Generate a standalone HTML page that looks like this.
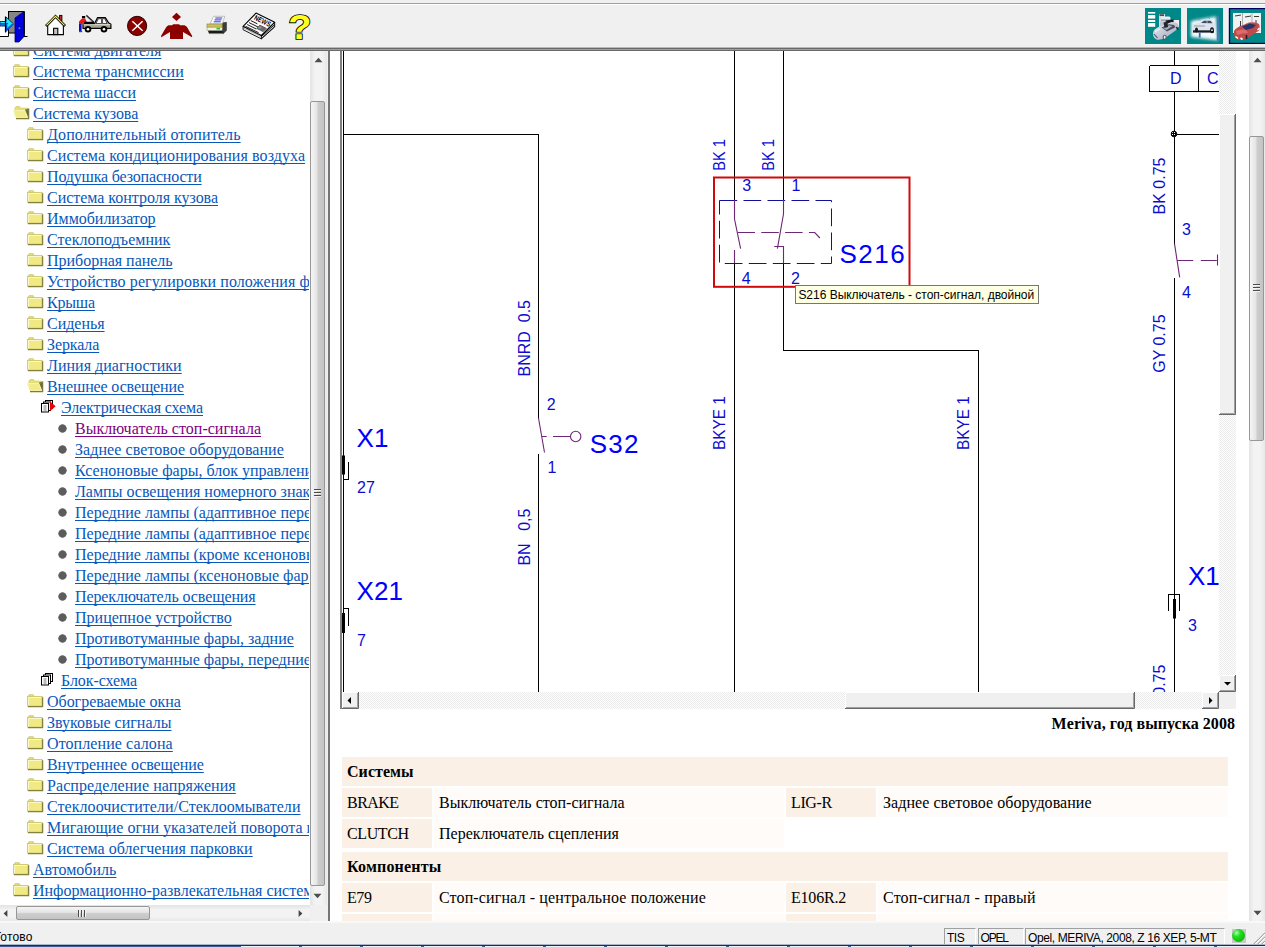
<!DOCTYPE html>
<html lang="ru">
<head>
<meta charset="utf-8">
<title>TIS</title>
<style>
*{box-sizing:border-box}
html,body{margin:0;padding:0}
body{width:1265px;height:947px;overflow:hidden;background:#f0f0f0;position:relative;font-family:"Liberation Serif",serif;font-size:16px;color:#000}
.abs{position:absolute}
/* toolbar */
#tb{left:0;top:0;width:1265px;height:51px;background:#f0f0f0;z-index:5}
#tb .l1{left:0;top:3px;width:1265px;height:1px;background:#a0a0a0}
#tb .l2{left:0;top:4px;width:1265px;height:1px;background:#fff}
#tb .b1{left:0;top:47px;width:1265px;height:1px;background:#b8b8b8}
#tb .b2{left:0;top:48px;width:1265px;height:3px;background:linear-gradient(180deg,#696969 0,#696969 1px,#a0a0a0 1px,#a0a0a0 2px,#696969 2px,#696969 3px)}
/* tree */
#tree{left:0;top:50px;width:309px;height:855px;background:#fff;overflow:hidden}
#tree .rows{position:absolute;left:0;top:-10px;width:600px}
.r{height:21px;line-height:21px;white-space:nowrap;position:relative;font-size:16px}
.r a{color:#0758ba;text-decoration:underline;text-underline-offset:2px;text-decoration-skip-ink:none;text-decoration-thickness:1px;position:absolute;top:0}
.r a.v{color:#800080}
.r svg{position:absolute}
.l0 a{left:33px}.l1 a{left:47px}.l2 a{left:61px}.l3 a{left:75px}
.l0 svg{left:13px;top:3px}.l1 svg{left:27px;top:3px}.l2 svg{left:41px;top:3px}
.l3 i{position:absolute;left:58px;top:6px;width:9px;height:9px;border-radius:50%;background:radial-gradient(circle,#5c5c5c 0,#5c5c5c 52%,#777 62%,rgba(130,130,130,0) 74%)}
/* scrollbars win7 */
.sbv{background:linear-gradient(90deg,#e3e3e3,#f3f3f3 30%,#f3f3f3 70%,#e8e8e8)}
.sbh{background:linear-gradient(180deg,#e3e3e3,#f3f3f3 30%,#f3f3f3 70%,#e8e8e8)}
.thv{border:1px solid #979797;border-radius:2px;background:linear-gradient(90deg,#f5f5f5,#e4e4e4 45%,#cdcdcd 55%,#c4c4c4)}
.thh{border:1px solid #979797;border-radius:2px;background:linear-gradient(180deg,#f5f5f5,#e4e4e4 45%,#cdcdcd 55%,#c4c4c4)}
/* right pane */
#rp{left:330px;top:50px;width:919px;height:871px;background:#fff;overflow:hidden}
/* status */
#st{left:0;top:921px;width:1265px;height:24px;background:#f0f0f0;font-family:"Liberation Sans",sans-serif;font-size:12px}

#tbl{left:12px;top:707px;width:886px;font-size:16px}
#tbl .h{position:absolute;left:0;width:886px;height:29px;line-height:29px;background:#faf0e6;font-weight:bold;padding-left:5px}
#tbl .c{position:absolute;height:29px;line-height:29px;padding-left:5px;white-space:nowrap;overflow:hidden}
#tbl .k{background:#faf0e6;width:90px}
#tbl .d{background:#fefbf9;width:350px}
.pn{position:absolute;top:7px;height:17px;border-top:1px solid #a0a0a0;border-left:1px solid #a0a0a0;border-right:1px solid #fff;line-height:18px;padding-left:2px;white-space:nowrap;overflow:hidden}
</style>
</head>
<body>
<!-- TOOLBAR -->
<div id="tb" class="abs">
<div class="abs l1"></div><div class="abs l2"></div>
<div class="abs b1"></div><div class="abs b2"></div>

<!-- door / exit -->
<svg class="abs" style="left:0;top:9px" width="29" height="35" viewBox="0 9 29 35">
<rect x="0" y="27" width="9" height="9" fill="#fff"/>
<path d="M0 36.500 H8.500 V33" stroke="#000" fill="none"/>
<path d="M24 36.500 H27.500" stroke="#000" fill="none"/>
<rect x="8.500" y="11.500" width="15.500" height="21.500" fill="#858585" stroke="#000"/>
<path d="M15 18 L24 11.500 L24 36.500 L19 42 L15 42 Z" fill="#0000d8" stroke="#00007a" stroke-width="0.8"/>
<path d="M24.200 11.500 V36.500" stroke="#000" stroke-width="1.2"/>
<circle cx="19.400" cy="28.300" r="1" fill="#5a78ff"/>
<path d="M0 21.500 H6 V17 L13.500 23.800 L6 31.500 V26 H0 Z" fill="#19e6ff" stroke="#0a2a50" stroke-width="0.9"/>
<path d="M0 25 H6.500 V30 L12.500 24.300" fill="none" stroke="#0050e0" stroke-width="1.600"/>
<path d="M0 23.600 H8" stroke="#0a5a6a" stroke-width="1"/>
<path d="M5.500 16.500 V32.500" stroke="#000" stroke-width="1.200"/>
</svg>
<!-- home -->
<svg class="abs" style="left:44px;top:12px" width="24" height="26" viewBox="44 12 24 26">
<rect x="59.600" y="15.400" width="2.300" height="5.500" fill="#c83220" stroke="#000" stroke-width="0.900"/>
<path d="M47.700 25 V34.600 H63.400 V25 L55.500 17.200 Z" fill="#fff" stroke="#000" stroke-width="1.100"/>
<path d="M46.900 25.100 L55.500 16.400 L64.100 25.100" fill="none" stroke="#000" stroke-width="2.700" stroke-linecap="square" stroke-linejoin="miter"/>
<path d="M46.900 25 L55.500 16.400 L64.100 25" fill="none" stroke="#fff040" stroke-width="1.100" stroke-linecap="square"/>
<rect x="53.600" y="28.300" width="4.200" height="6.300" fill="#c4c4c4" stroke="#000" stroke-width="1.100"/>
</svg>
<!-- car + mechanic -->
<svg class="abs" style="left:77px;top:12px" width="38" height="26" viewBox="77 12 38 26">
<rect x="82" y="16" width="3.200" height="2.400" fill="#000"/>
<path d="M82 18.400 L85.200 18.600 L87 22.400 L83.500 22.800 L82 24.200 H79 V21.500 Z" fill="#e81818"/>
<rect x="79" y="24" width="2.600" height="7.500" fill="#0a0ac8"/>
<rect x="79" y="31" width="3.200" height="1.200" fill="#8a1a8a"/>
<path d="M86.300 15.400 L93.800 22.300" stroke="#2a2a2a" stroke-width="1.500"/>
<path d="M85.800 16 L92.800 22.600" stroke="#a0a0a0" stroke-width="0.700"/>
<path d="M84.500 21.800 H94 V24.200 H83.500 Z" fill="#000"/>
<path d="M83 24 H94.300 L97.600 17.600 H105.300 L108.600 22.800 L110.900 24.300 V28.400 H83 Z" fill="#a9a696" stroke="#000" stroke-width="1.200" stroke-linejoin="round"/>
<path d="M96 23.500 L98.500 18.700 H101.500 V23.500 Z M102.600 18.700 H104.700 L107 23.500 H102.600 Z" fill="#fff" stroke="#000" stroke-width="0.600"/>
<path d="M83.500 24.600 H110.300" stroke="#e8e8e0" stroke-width="0.800"/>
<circle cx="88" cy="29.200" r="3.300" fill="#000"/><circle cx="88" cy="29.200" r="1.300" fill="#fff"/>
<circle cx="104" cy="29.200" r="3.300" fill="#000"/><circle cx="104" cy="29.200" r="1.300" fill="#fff"/>
</svg>
<!-- cancel -->
<svg class="abs" style="left:125px;top:14px" width="24" height="24" viewBox="125 14 24 24">
<circle cx="137.100" cy="25.900" r="9.600" fill="#8d0000" stroke="#2a0000" stroke-width="1"/>
<path d="M132.300 21.200 L142.600 30.800 M142.600 21.200 L132.300 30.800" stroke="#fff" stroke-width="1.500"/>
</svg>
<!-- person -->
<svg class="abs" style="left:159px;top:11px" width="36" height="30" viewBox="159 11 36 30">
<path d="M176.500 12.700 L181 16.900 L176.500 21.100 L172 16.900 Z" fill="#8d0000"/>
<path d="M173.100 24.300 H179.100 L180 25.300 H184.500 Q186.500 26 187.300 27.600 L192.200 36 L192 37.200 L183 32 V38.900 H170 V32 L161.300 37.200 L161 36 L166 27.600 Q166.800 26 168.500 25.300 H172.200 Z" fill="#8d0000"/>
</svg>
<!-- printer -->
<svg class="abs" style="left:204px;top:13px" width="26" height="24" viewBox="204 13 26 24">
<path d="M222 22.500 L226.800 22 V30.500 L223.500 33.700 L222 33.700 Z" fill="#3c3c3c"/>
<path d="M213.500 16.300 H224.800 L222.200 23.800 H210.200 Z" fill="#fff" stroke="#9a9a9a" stroke-width="0.600"/>
<path d="M215.300 18 H222.300 M214.500 19.900 H221.500 M213.700 21.800 H220.700" stroke="#1a1ad0" stroke-width="0.900"/>
<rect x="207" y="24" width="15.200" height="3.200" fill="#c9c060" stroke="#8a8430" stroke-width="0.600"/>
<rect x="207" y="27.200" width="15.200" height="3.300" fill="#f4f2e0" stroke="#8a8a70" stroke-width="0.500"/>
<rect x="216.500" y="27.800" width="3.500" height="1.700" fill="#20c040"/>
<path d="M208 30.800 H222.500 L223.500 33.700 H209 Z" fill="#1a1a1a"/>
<path d="M209 33.600 H223" stroke="#9a943c" stroke-width="0.900"/>
</svg>
<!-- newspaper -->
<svg class="abs" style="left:240px;top:10px" width="38" height="32" viewBox="240 10 38 32">
<defs><pattern id="hat" width="1.600" height="1.600" patternUnits="userSpaceOnUse" patternTransform="rotate(-42)"><rect width="1.600" height="1.600" fill="#e8e8e8"/><rect width="1.600" height="0.900" fill="#222"/></pattern></defs>
<path d="M261.400 35.500 L274.700 22.200 V27 L261.400 38.900 Z" fill="url(#hat)" stroke="#000" stroke-width="0.900" stroke-linejoin="round"/>
<path d="M243.100 26.300 L261.400 35.500 V38.900 L243.100 29.700 Z" fill="#fff" stroke="#000" stroke-width="0.900" stroke-linejoin="round"/>
<path d="M243.600 28 L261.400 37.200" stroke="#888" stroke-width="0.600"/>
<path d="M243.100 26.300 L256 13.100 L274.700 22.200 L261.400 35.500 Z" fill="#fbfbfb" stroke="#000" stroke-width="1.100" stroke-linejoin="round"/>
<g stroke="#1a1a1a" stroke-width="1">
<path d="M250.800 20.600 L257.300 23.800"/>
<path d="M249 22.600 L258.200 27.100"/>
<path d="M247.200 24.500 L256.300 29"/>
<path d="M245.600 26.300 L258.600 32.700"/>
<path d="M246.300 28.600 L259.500 35.100" stroke="#666" stroke-width="0.700"/>
</g>
<path d="M259.800 25.200 L266.300 28.400 L263.200 31.600 L256.800 28.400 Z" fill="#8c8c8c" stroke="#222" stroke-width="0.700"/>
<path d="M262.500 26.800 L265.700 28.400 L263.200 31 L260 29.400 Z" fill="#6a6a6a"/>
<text transform="matrix(0.690 0.337 -0.470 0.840 253.400 19.200)" font-family="'Liberation Sans',sans-serif" font-weight="bold" font-size="7.500" fill="#000" letter-spacing="0.200">NEWS</text>
</svg>
<!-- help -->
<svg class="abs" style="left:285px;top:8px" width="30" height="36" viewBox="285 8 30 36">
<text transform="translate(288.300,39.300) scale(1.070,1)" font-family="'Liberation Sans',sans-serif" font-weight="bold" font-size="35.500" fill="#ffff20" stroke="#000" stroke-width="1.700" paint-order="stroke fill">?</text>
</svg>
<!-- right tiles -->
<svg class="abs" style="left:1145px;top:8px" width="120" height="36" viewBox="1145 8 120 36">
<defs>
<filter id="bl1" x="-20%" y="-20%" width="140%" height="140%"><feGaussianBlur stdDeviation="0.600"/></filter>
<filter id="bl2" x="-20%" y="-20%" width="140%" height="140%"><feGaussianBlur stdDeviation="1.600"/></filter>
<linearGradient id="sil" x1="0" y1="0" x2="1" y2="1"><stop offset="0" stop-color="#eef0f6"/><stop offset="1" stop-color="#9aa2b8"/></linearGradient>
</defs>
<!-- tile 1 -->
<rect x="1145" y="8" width="36" height="36" fill="#008888"/>
<g fill="#fff"><rect x="1148" y="12" width="7.200" height="1.600"/><rect x="1148" y="15" width="7.200" height="3.600"/><rect x="1148" y="20" width="7.200" height="2"/><rect x="1148" y="23" width="7.200" height="3.800"/></g>
<g filter="url(#bl1)">
<rect x="1159" y="14" width="6" height="13" fill="#d8dce2"/>
<rect x="1159.500" y="14.300" width="4.500" height="1.600" fill="#3a3e44"/>
<rect x="1161" y="16.500" width="9.500" height="4" rx="1.500" fill="#e8eaee"/>
<rect x="1161" y="19.500" width="9.500" height="1.200" fill="#8a9098"/>
<rect x="1160" y="21.500" width="6" height="4.500" fill="#c4c8d0"/>
<path d="M1166 20.500 L1173.500 19.500 L1177 23.500 L1168 26 Z" fill="#16181c"/>
<rect x="1173.600" y="20" width="5.400" height="7" fill="#eceef2"/>
<path d="M1153 33.500 Q1153 28.500 1161 26 L1171.500 22 Q1178 21.500 1178.600 26 L1177 29.500 L1166.500 37 Q1160 41 1156 39.300 Q1153 37.500 1153 33.500 Z" fill="url(#sil)"/>
<path d="M1161.500 27.500 L1169 24.300 L1174 25 L1175.500 27.300 L1167 31.500 Z" fill="#4a505e"/>
<path d="M1163 28 L1169 25.300 L1172.500 26 L1166.500 30 Z" fill="#a8b0c0"/>
<path d="M1163.500 22.500 L1167.500 21.500 L1168 27 L1164.500 28 Z" fill="#24272e"/>
<ellipse cx="1164.700" cy="37.200" rx="1.500" ry="2" fill="#f0f0f4" stroke="#3a3e48" stroke-width="0.900"/>
<path d="M1176.500 27 L1178 30" stroke="#2a2e38" stroke-width="1.600"/>
<path d="M1154 34 L1157.500 38" stroke="#4a4e5c" stroke-width="1.100"/>
<path d="M1155 31.500 L1160 29" stroke="#fff" stroke-width="0.800"/>
</g>
<!-- tile 2 -->
<rect x="1187" y="8" width="36" height="36" fill="#008888"/>
<g filter="url(#bl2)"><path d="M1191 21 L1216 16.500 L1218 40.500 L1191 37 Z" fill="#f4f9fc"/></g>
<g filter="url(#bl1)">
<rect x="1216.800" y="16" width="2" height="24.500" fill="#4a78bc"/>
<path d="M1193 24 L1199.500 22.500 L1203 19.800 L1211.500 19.800 L1214.500 23.500 L1215 30 L1193 30.500 Z" fill="#dfe4ec"/>
<path d="M1201 23 L1204 20.700 L1210.500 20.700 L1212.500 23.300 Z" fill="#3c4a6c"/>
<path d="M1207 20.700 V23.200" stroke="#dfe4ec" stroke-width="0.700"/>
<path d="M1193 30.300 H1214 V32.600 H1193 Z" fill="#181e28"/>
<ellipse cx="1212" cy="30.300" rx="1.900" ry="3" fill="#12151a"/>
<ellipse cx="1196.500" cy="30" rx="1.500" ry="2.400" fill="#12151a"/>
<circle cx="1212" cy="30.200" r="0.900" fill="#e8e8e8"/>
<rect x="1198.800" y="32.600" width="1.800" height="5" fill="#3a68b0"/>
<path d="M1194 26 H1205" stroke="#8a94a8" stroke-width="0.900"/>
<path d="M1197 17.500 L1200 20.500 M1207 16.500 L1210 18.500" stroke="#6a86b8" stroke-width="0.800"/>
</g>
<!-- tile 3 -->
<rect x="1229.500" y="8.500" width="40" height="35" fill="#008888" stroke="#000064" stroke-width="1.400"/>
<rect x="1233" y="13" width="28" height="20" fill="#f0f2f2"/>
<g filter="url(#bl1)">
<path d="M1242.500 13 V27 M1252 13 V22" stroke="#9aa0a0" stroke-width="0.800"/>
<path d="M1235 16 L1241 15 M1245 17 L1251 16 M1254 16.500 L1259 16.500 M1240.500 21 V26 M1256 20 V24" stroke="#3a3a3a" stroke-width="1"/>
<path d="M1234 31 Q1236 27.500 1242 25.500 L1249 22.500 Q1256 21.500 1259 24 Q1260.500 27 1259 30.500 L1250 36.500 L1243 40 Q1237 40.500 1235 37.500 Q1233.500 34 1234 31 Z" fill="#c04a4a"/>
<path d="M1242 26.500 L1250 23.500 L1256 25 L1253 28 L1246 30 Z" fill="#26306c"/>
<path d="M1236 31 Q1242 28.500 1246 30 L1248 33 Q1242 33 1237 35 Z" fill="#dc6c6c"/>
<path d="M1235.500 36.500 L1238 38.500 M1240.500 38 L1242.500 39.500" stroke="#fff" stroke-width="1.600"/>
<path d="M1246.500 35 V39" stroke="#1a1a2a" stroke-width="1.600"/>
<path d="M1257.500 30 L1259.500 28" stroke="#fff" stroke-width="1.200"/>
</g>
</svg>

</div>

<!-- TREE -->
<div id="tree" class="abs"><div class="rows">

<div class="r l0"><svg width="17" height="14" viewBox="0 0 17 14"><path d="M1 2.600 L2 0.700 H6.200 L7.300 2.600 Z" fill="#e6e07a" stroke="#c8c36c" stroke-width="0.800"/><rect x="0.500" y="2.500" width="14.600" height="9.600" fill="#f1e984" stroke="#cdc870" stroke-width="0.900"/><path d="M1.500 11.200 V3.500 H14.200" fill="none" stroke="#fbf9d2" stroke-width="0.900"/><path d="M1 12.600 H15.600 V3.200" fill="none" stroke="#84823e" stroke-width="1.300"/></svg><a style="letter-spacing:-0.012px">Система двигателя</a></div>
<div class="r l0"><svg width="17" height="14" viewBox="0 0 17 14"><path d="M1 2.600 L2 0.700 H6.200 L7.300 2.600 Z" fill="#e6e07a" stroke="#c8c36c" stroke-width="0.800"/><rect x="0.500" y="2.500" width="14.600" height="9.600" fill="#f1e984" stroke="#cdc870" stroke-width="0.900"/><path d="M1.500 11.200 V3.500 H14.200" fill="none" stroke="#fbf9d2" stroke-width="0.900"/><path d="M1 12.600 H15.600 V3.200" fill="none" stroke="#84823e" stroke-width="1.300"/></svg><a style="letter-spacing:0.068px">Система трансмиссии</a></div>
<div class="r l0"><svg width="17" height="14" viewBox="0 0 17 14"><path d="M1 2.600 L2 0.700 H6.200 L7.300 2.600 Z" fill="#e6e07a" stroke="#c8c36c" stroke-width="0.800"/><rect x="0.500" y="2.500" width="14.600" height="9.600" fill="#f1e984" stroke="#cdc870" stroke-width="0.900"/><path d="M1.500 11.200 V3.500 H14.200" fill="none" stroke="#fbf9d2" stroke-width="0.900"/><path d="M1 12.600 H15.600 V3.200" fill="none" stroke="#84823e" stroke-width="1.300"/></svg><a style="letter-spacing:-0.056px">Система шасси</a></div>
<div class="r l0"><svg width="17" height="14" viewBox="0 0 17 14"><path d="M2 2.2 L3 0.6 L6.5 0.6 L7.6 2.2 L14.5 2.2 L14.5 5 L2 5 Z" fill="#e6df74" stroke="#d8d270" stroke-width="1"/><path d="M0.5 4.6 L12 4.6 L15 12 L3 12 Z" fill="#f2eb8a" stroke="#f7f3b8" stroke-width="1"/><path d="M12.2 4.2 L15.6 3.2 L15.6 12.6 L3 12.6" fill="none" stroke="#7d7b3a" stroke-width="1.3"/><path d="M12.4 4.6 L15.2 4 L15.2 11.4 Z" fill="#6b6934"/></svg><a style="letter-spacing:-0.04px">Система кузова</a></div>
<div class="r l1"><svg width="17" height="14" viewBox="0 0 17 14"><path d="M1 2.600 L2 0.700 H6.200 L7.300 2.600 Z" fill="#e6e07a" stroke="#c8c36c" stroke-width="0.800"/><rect x="0.500" y="2.500" width="14.600" height="9.600" fill="#f1e984" stroke="#cdc870" stroke-width="0.900"/><path d="M1.500 11.200 V3.500 H14.200" fill="none" stroke="#fbf9d2" stroke-width="0.900"/><path d="M1 12.600 H15.600 V3.200" fill="none" stroke="#84823e" stroke-width="1.300"/></svg><a style="letter-spacing:0.121px">Дополнительный отопитель</a></div>
<div class="r l1"><svg width="17" height="14" viewBox="0 0 17 14"><path d="M1 2.600 L2 0.700 H6.200 L7.300 2.600 Z" fill="#e6e07a" stroke="#c8c36c" stroke-width="0.800"/><rect x="0.500" y="2.500" width="14.600" height="9.600" fill="#f1e984" stroke="#cdc870" stroke-width="0.900"/><path d="M1.500 11.200 V3.500 H14.200" fill="none" stroke="#fbf9d2" stroke-width="0.900"/><path d="M1 12.600 H15.600 V3.200" fill="none" stroke="#84823e" stroke-width="1.300"/></svg><a style="letter-spacing:0.08px">Система кондиционирования воздуха</a></div>
<div class="r l1"><svg width="17" height="14" viewBox="0 0 17 14"><path d="M1 2.600 L2 0.700 H6.200 L7.300 2.600 Z" fill="#e6e07a" stroke="#c8c36c" stroke-width="0.800"/><rect x="0.500" y="2.500" width="14.600" height="9.600" fill="#f1e984" stroke="#cdc870" stroke-width="0.900"/><path d="M1.500 11.200 V3.500 H14.200" fill="none" stroke="#fbf9d2" stroke-width="0.900"/><path d="M1 12.600 H15.600 V3.200" fill="none" stroke="#84823e" stroke-width="1.300"/></svg><a style="letter-spacing:-0.172px">Подушка безопасности</a></div>
<div class="r l1"><svg width="17" height="14" viewBox="0 0 17 14"><path d="M1 2.600 L2 0.700 H6.200 L7.300 2.600 Z" fill="#e6e07a" stroke="#c8c36c" stroke-width="0.800"/><rect x="0.500" y="2.500" width="14.600" height="9.600" fill="#f1e984" stroke="#cdc870" stroke-width="0.900"/><path d="M1.500 11.200 V3.500 H14.200" fill="none" stroke="#fbf9d2" stroke-width="0.900"/><path d="M1 12.600 H15.600 V3.200" fill="none" stroke="#84823e" stroke-width="1.300"/></svg><a style="letter-spacing:-0.026px">Система контроля кузова</a></div>
<div class="r l1"><svg width="17" height="14" viewBox="0 0 17 14"><path d="M1 2.600 L2 0.700 H6.200 L7.300 2.600 Z" fill="#e6e07a" stroke="#c8c36c" stroke-width="0.800"/><rect x="0.500" y="2.500" width="14.600" height="9.600" fill="#f1e984" stroke="#cdc870" stroke-width="0.900"/><path d="M1.500 11.200 V3.500 H14.200" fill="none" stroke="#fbf9d2" stroke-width="0.900"/><path d="M1 12.600 H15.600 V3.200" fill="none" stroke="#84823e" stroke-width="1.300"/></svg><a style="letter-spacing:-0.019px">Иммобилизатор</a></div>
<div class="r l1"><svg width="17" height="14" viewBox="0 0 17 14"><path d="M1 2.600 L2 0.700 H6.200 L7.300 2.600 Z" fill="#e6e07a" stroke="#c8c36c" stroke-width="0.800"/><rect x="0.500" y="2.500" width="14.600" height="9.600" fill="#f1e984" stroke="#cdc870" stroke-width="0.900"/><path d="M1.500 11.200 V3.500 H14.200" fill="none" stroke="#fbf9d2" stroke-width="0.900"/><path d="M1 12.600 H15.600 V3.200" fill="none" stroke="#84823e" stroke-width="1.300"/></svg><a style="letter-spacing:0.03px">Стеклоподъемник</a></div>
<div class="r l1"><svg width="17" height="14" viewBox="0 0 17 14"><path d="M1 2.600 L2 0.700 H6.200 L7.300 2.600 Z" fill="#e6e07a" stroke="#c8c36c" stroke-width="0.800"/><rect x="0.500" y="2.500" width="14.600" height="9.600" fill="#f1e984" stroke="#cdc870" stroke-width="0.900"/><path d="M1.500 11.200 V3.500 H14.200" fill="none" stroke="#fbf9d2" stroke-width="0.900"/><path d="M1 12.600 H15.600 V3.200" fill="none" stroke="#84823e" stroke-width="1.300"/></svg><a style="letter-spacing:-0.018px">Приборная панель</a></div>
<div class="r l1"><svg width="17" height="14" viewBox="0 0 17 14"><path d="M1 2.600 L2 0.700 H6.200 L7.300 2.600 Z" fill="#e6e07a" stroke="#c8c36c" stroke-width="0.800"/><rect x="0.500" y="2.500" width="14.600" height="9.600" fill="#f1e984" stroke="#cdc870" stroke-width="0.900"/><path d="M1.500 11.200 V3.500 H14.200" fill="none" stroke="#fbf9d2" stroke-width="0.900"/><path d="M1 12.600 H15.600 V3.200" fill="none" stroke="#84823e" stroke-width="1.300"/></svg><a style="letter-spacing:0.09px">Устройство регулировки положения фар</a></div>
<div class="r l1"><svg width="17" height="14" viewBox="0 0 17 14"><path d="M1 2.600 L2 0.700 H6.200 L7.300 2.600 Z" fill="#e6e07a" stroke="#c8c36c" stroke-width="0.800"/><rect x="0.500" y="2.500" width="14.600" height="9.600" fill="#f1e984" stroke="#cdc870" stroke-width="0.900"/><path d="M1.500 11.200 V3.500 H14.200" fill="none" stroke="#fbf9d2" stroke-width="0.900"/><path d="M1 12.600 H15.600 V3.200" fill="none" stroke="#84823e" stroke-width="1.300"/></svg><a style="letter-spacing:-0.189px">Крыша</a></div>
<div class="r l1"><svg width="17" height="14" viewBox="0 0 17 14"><path d="M1 2.600 L2 0.700 H6.200 L7.300 2.600 Z" fill="#e6e07a" stroke="#c8c36c" stroke-width="0.800"/><rect x="0.500" y="2.500" width="14.600" height="9.600" fill="#f1e984" stroke="#cdc870" stroke-width="0.900"/><path d="M1.500 11.200 V3.500 H14.200" fill="none" stroke="#fbf9d2" stroke-width="0.900"/><path d="M1 12.600 H15.600 V3.200" fill="none" stroke="#84823e" stroke-width="1.300"/></svg><a style="letter-spacing:-0.015px">Сиденья</a></div>
<div class="r l1"><svg width="17" height="14" viewBox="0 0 17 14"><path d="M1 2.600 L2 0.700 H6.200 L7.300 2.600 Z" fill="#e6e07a" stroke="#c8c36c" stroke-width="0.800"/><rect x="0.500" y="2.500" width="14.600" height="9.600" fill="#f1e984" stroke="#cdc870" stroke-width="0.900"/><path d="M1.500 11.200 V3.500 H14.200" fill="none" stroke="#fbf9d2" stroke-width="0.900"/><path d="M1 12.600 H15.600 V3.200" fill="none" stroke="#84823e" stroke-width="1.300"/></svg><a style="letter-spacing:-0.112px">Зеркала</a></div>
<div class="r l1"><svg width="17" height="14" viewBox="0 0 17 14"><path d="M1 2.600 L2 0.700 H6.200 L7.300 2.600 Z" fill="#e6e07a" stroke="#c8c36c" stroke-width="0.800"/><rect x="0.500" y="2.500" width="14.600" height="9.600" fill="#f1e984" stroke="#cdc870" stroke-width="0.900"/><path d="M1.500 11.200 V3.500 H14.200" fill="none" stroke="#fbf9d2" stroke-width="0.900"/><path d="M1 12.600 H15.600 V3.200" fill="none" stroke="#84823e" stroke-width="1.300"/></svg><a style="letter-spacing:0.028px">Линия диагностики</a></div>
<div class="r l1"><svg width="17" height="14" viewBox="0 0 17 14"><path d="M2 2.2 L3 0.6 L6.5 0.6 L7.6 2.2 L14.5 2.2 L14.5 5 L2 5 Z" fill="#e6df74" stroke="#d8d270" stroke-width="1"/><path d="M0.5 4.6 L12 4.6 L15 12 L3 12 Z" fill="#f2eb8a" stroke="#f7f3b8" stroke-width="1"/><path d="M12.2 4.2 L15.6 3.2 L15.6 12.6 L3 12.6" fill="none" stroke="#7d7b3a" stroke-width="1.3"/><path d="M12.4 4.6 L15.2 4 L15.2 11.4 Z" fill="#6b6934"/></svg><a style="letter-spacing:-0.132px">Внешнее освещение</a></div>
<div class="r l2"><svg width="16" height="13" viewBox="0 0 16 13"><rect x="4.5" y="0.5" width="7" height="8" fill="#fff" stroke="#000"/><rect x="2.5" y="2" width="7" height="8.5" fill="#fff" stroke="#000"/><rect x="0.5" y="3.5" width="7" height="8.5" fill="#fff" stroke="#000"/><path d="M2.5 6 H5.5 M2.5 8 H5.5 M2.5 10 H5.5" stroke="#777" stroke-width="1"/><path d="M9 1.2 L14.6 6.2 L9 11.2 Z" fill="#e8000c"/></svg><a style="letter-spacing:-0.111px">Электрическая схема</a></div>
<div class="r l3"><i></i><a style="letter-spacing:0.02px" class="v">Выключатель стоп-сигнала</a></div>
<div class="r l3"><i></i><a style="letter-spacing:0.07px">Заднее световое оборудование</a></div>
<div class="r l3"><i></i><a>Ксеноновые фары, блок управления</a></div>
<div class="r l3"><i></i><a>Лампы освещения номерного знака</a></div>
<div class="r l3"><i></i><a>Передние лампы (адаптивное переднее освещение)</a></div>
<div class="r l3"><i></i><a>Передние лампы (адаптивное переднее освещение, AFL)</a></div>
<div class="r l3"><i></i><a>Передние лампы (кроме ксеноновых фар)</a></div>
<div class="r l3"><i></i><a>Передние лампы (ксеноновые фары)</a></div>
<div class="r l3"><i></i><a style="letter-spacing:-0.102px">Переключатель освещения</a></div>
<div class="r l3"><i></i><a style="letter-spacing:0.005px">Прицепное устройство</a></div>
<div class="r l3"><i></i><a style="letter-spacing:-0.0px">Противотуманные фары, задние</a></div>
<div class="r l3"><i></i><a>Противотуманные фары, передние</a></div>
<div class="r l2"><svg width="16" height="13" viewBox="0 0 16 13"><rect x="4.5" y="0.5" width="7" height="8" fill="#fff" stroke="#000"/><rect x="2.5" y="2" width="7" height="8.5" fill="#fff" stroke="#000"/><rect x="0.5" y="3.5" width="7" height="8.5" fill="#fff" stroke="#000"/><path d="M2.5 6 H5.5 M2.5 8 H5.5 M2.5 10 H5.5" stroke="#777" stroke-width="1"/></svg><a style="letter-spacing:-0.068px">Блок-схема</a></div>
<div class="r l1"><svg width="17" height="14" viewBox="0 0 17 14"><path d="M1 2.600 L2 0.700 H6.200 L7.300 2.600 Z" fill="#e6e07a" stroke="#c8c36c" stroke-width="0.800"/><rect x="0.500" y="2.500" width="14.600" height="9.600" fill="#f1e984" stroke="#cdc870" stroke-width="0.900"/><path d="M1.500 11.200 V3.500 H14.200" fill="none" stroke="#fbf9d2" stroke-width="0.900"/><path d="M1 12.600 H15.600 V3.200" fill="none" stroke="#84823e" stroke-width="1.300"/></svg><a style="letter-spacing:-0.025px">Обогреваемые окна</a></div>
<div class="r l1"><svg width="17" height="14" viewBox="0 0 17 14"><path d="M1 2.600 L2 0.700 H6.200 L7.300 2.600 Z" fill="#e6e07a" stroke="#c8c36c" stroke-width="0.800"/><rect x="0.500" y="2.500" width="14.600" height="9.600" fill="#f1e984" stroke="#cdc870" stroke-width="0.900"/><path d="M1.500 11.200 V3.500 H14.200" fill="none" stroke="#fbf9d2" stroke-width="0.900"/><path d="M1 12.600 H15.600 V3.200" fill="none" stroke="#84823e" stroke-width="1.300"/></svg><a style="letter-spacing:0.021px">Звуковые сигналы</a></div>
<div class="r l1"><svg width="17" height="14" viewBox="0 0 17 14"><path d="M1 2.600 L2 0.700 H6.200 L7.300 2.600 Z" fill="#e6e07a" stroke="#c8c36c" stroke-width="0.800"/><rect x="0.500" y="2.500" width="14.600" height="9.600" fill="#f1e984" stroke="#cdc870" stroke-width="0.900"/><path d="M1.500 11.200 V3.500 H14.200" fill="none" stroke="#fbf9d2" stroke-width="0.900"/><path d="M1 12.600 H15.600 V3.200" fill="none" stroke="#84823e" stroke-width="1.300"/></svg><a style="letter-spacing:0.087px">Отопление салона</a></div>
<div class="r l1"><svg width="17" height="14" viewBox="0 0 17 14"><path d="M1 2.600 L2 0.700 H6.200 L7.300 2.600 Z" fill="#e6e07a" stroke="#c8c36c" stroke-width="0.800"/><rect x="0.500" y="2.500" width="14.600" height="9.600" fill="#f1e984" stroke="#cdc870" stroke-width="0.900"/><path d="M1.500 11.200 V3.500 H14.200" fill="none" stroke="#fbf9d2" stroke-width="0.900"/><path d="M1 12.600 H15.600 V3.200" fill="none" stroke="#84823e" stroke-width="1.300"/></svg><a style="letter-spacing:-0.088px">Внутреннее освещение</a></div>
<div class="r l1"><svg width="17" height="14" viewBox="0 0 17 14"><path d="M1 2.600 L2 0.700 H6.200 L7.300 2.600 Z" fill="#e6e07a" stroke="#c8c36c" stroke-width="0.800"/><rect x="0.500" y="2.500" width="14.600" height="9.600" fill="#f1e984" stroke="#cdc870" stroke-width="0.900"/><path d="M1.500 11.200 V3.500 H14.200" fill="none" stroke="#fbf9d2" stroke-width="0.900"/><path d="M1 12.600 H15.600 V3.200" fill="none" stroke="#84823e" stroke-width="1.300"/></svg><a style="letter-spacing:0.078px">Распределение напряжения</a></div>
<div class="r l1"><svg width="17" height="14" viewBox="0 0 17 14"><path d="M1 2.600 L2 0.700 H6.200 L7.300 2.600 Z" fill="#e6e07a" stroke="#c8c36c" stroke-width="0.800"/><rect x="0.500" y="2.500" width="14.600" height="9.600" fill="#f1e984" stroke="#cdc870" stroke-width="0.900"/><path d="M1.500 11.200 V3.500 H14.200" fill="none" stroke="#fbf9d2" stroke-width="0.900"/><path d="M1 12.600 H15.600 V3.200" fill="none" stroke="#84823e" stroke-width="1.300"/></svg><a style="letter-spacing:0.053px">Стеклоочистители/Стеклоомыватели</a></div>
<div class="r l1"><svg width="17" height="14" viewBox="0 0 17 14"><path d="M1 2.600 L2 0.700 H6.200 L7.300 2.600 Z" fill="#e6e07a" stroke="#c8c36c" stroke-width="0.800"/><rect x="0.500" y="2.500" width="14.600" height="9.600" fill="#f1e984" stroke="#cdc870" stroke-width="0.900"/><path d="M1.500 11.200 V3.500 H14.200" fill="none" stroke="#fbf9d2" stroke-width="0.900"/><path d="M1 12.600 H15.600 V3.200" fill="none" stroke="#84823e" stroke-width="1.300"/></svg><a>Мигающие огни указателей поворота и аварийной сигнализации</a></div>
<div class="r l1"><svg width="17" height="14" viewBox="0 0 17 14"><path d="M1 2.600 L2 0.700 H6.200 L7.300 2.600 Z" fill="#e6e07a" stroke="#c8c36c" stroke-width="0.800"/><rect x="0.500" y="2.500" width="14.600" height="9.600" fill="#f1e984" stroke="#cdc870" stroke-width="0.900"/><path d="M1.500 11.200 V3.500 H14.200" fill="none" stroke="#fbf9d2" stroke-width="0.900"/><path d="M1 12.600 H15.600 V3.200" fill="none" stroke="#84823e" stroke-width="1.300"/></svg><a style="letter-spacing:0.022px">Система облегчения парковки</a></div>
<div class="r l0"><svg width="17" height="14" viewBox="0 0 17 14"><path d="M1 2.600 L2 0.700 H6.200 L7.300 2.600 Z" fill="#e6e07a" stroke="#c8c36c" stroke-width="0.800"/><rect x="0.500" y="2.500" width="14.600" height="9.600" fill="#f1e984" stroke="#cdc870" stroke-width="0.900"/><path d="M1.500 11.200 V3.500 H14.200" fill="none" stroke="#fbf9d2" stroke-width="0.900"/><path d="M1 12.600 H15.600 V3.200" fill="none" stroke="#84823e" stroke-width="1.300"/></svg><a style="letter-spacing:0.01px">Автомобиль</a></div>
<div class="r l0"><svg width="17" height="14" viewBox="0 0 17 14"><path d="M1 2.600 L2 0.700 H6.200 L7.300 2.600 Z" fill="#e6e07a" stroke="#c8c36c" stroke-width="0.800"/><rect x="0.500" y="2.500" width="14.600" height="9.600" fill="#f1e984" stroke="#cdc870" stroke-width="0.900"/><path d="M1.500 11.200 V3.500 H14.200" fill="none" stroke="#fbf9d2" stroke-width="0.900"/><path d="M1 12.600 H15.600 V3.200" fill="none" stroke="#84823e" stroke-width="1.300"/></svg><a>Информационно-развлекательная система</a></div>
</div></div>

<div class="abs" style="left:309px;top:50px;width:1px;height:855px;background:#fff"></div>
<!-- tree vertical scrollbar -->
<div class="abs sbv" style="left:310px;top:50px;width:17px;height:855px"></div>
<svg class="abs" style="left:314px;top:57px" width="9" height="6" viewBox="0 0 9 6"><path d="M0.5 5.2 L4.5 0.8 L8.5 5.2 Z" fill="#4d4d4d"/></svg>
<div class="abs thv" style="left:310px;top:101px;width:15px;height:785px"></div>
<div class="abs" style="left:314px;top:489px;width:7px;height:9px;background:repeating-linear-gradient(180deg,#4a4a4a 0,#4a4a4a 1.2px,#f4f4f4 1.2px,#f4f4f4 2.2px,rgba(0,0,0,0) 2.2px,rgba(0,0,0,0) 3px)"></div>
<svg class="abs" style="left:313px;top:893px" width="9" height="6" viewBox="0 0 9 6"><path d="M0.5 0.8 L4.5 5.2 L8.5 0.8 Z" fill="#4d4d4d"/></svg>
<!-- tree horizontal scrollbar -->
<div class="abs sbh" style="left:0;top:905px;width:310px;height:16px"></div>
<div class="abs" style="left:310px;top:905px;width:17px;height:16px;background:#f0f0f0"></div>
<svg class="abs" style="left:3px;top:909px" width="5" height="9" viewBox="0 0 5 9"><path d="M4.400 1 L0.600 4.500 L4.400 8 Z" fill="#444"/></svg>
<div class="abs thh" style="left:16px;top:906px;width:134px;height:14px"></div>
<div class="abs" style="left:78px;top:910px;width:9px;height:7px;background:repeating-linear-gradient(90deg,#4a4a4a 0,#4a4a4a 1.2px,#f4f4f4 1.2px,#f4f4f4 2.2px,rgba(0,0,0,0) 2.2px,rgba(0,0,0,0) 3px)"></div>
<svg class="abs" style="left:298px;top:909px" width="5" height="9" viewBox="0 0 5 9"><path d="M0.600 1 L4.400 4.500 L0.600 8 Z" fill="#444"/></svg>


<!-- divider -->
<div class="abs" style="left:327px;top:50px;width:1px;height:871px;background:#f0f0f0"></div>
<div class="abs" style="left:328px;top:50px;width:2px;height:871px;background:#767676"></div>

<!-- RIGHT PANE -->
<div id="rp" class="abs">

<svg class="abs" style="left:10px;top:0" width="896" height="659" viewBox="340 50 896 659" font-family="'Liberation Sans',sans-serif" fill="#0c0cd0">
<defs><pattern id="chk" width="2" height="2" patternUnits="userSpaceOnUse"><rect width="2" height="2" fill="#fff"/><rect width="1" height="1" fill="#eaeaea"/><rect x="1" y="1" width="1" height="1" fill="#eaeaea"/></pattern>
<pattern id="dth" width="2" height="2" patternUnits="userSpaceOnUse"><rect width="2" height="2" fill="#000"/><rect width="1" height="1" fill="#fff"/></pattern></defs>
<!-- frame left border -->
<rect x="340" y="50" width="2" height="659" fill="#808080"/>
<g stroke="#000" stroke-width="1" fill="none" shape-rendering="crispEdges">
<path d="M343.500 50 V692"/>
<path d="M343 134.500 H538.500 V418"/>
<path d="M538.500 454 V692"/>
<path d="M734.500 50 V200 M734.500 263 V692"/>
<path d="M783.500 50 V200 M783.500 263 V350.500 H978.500 V692"/>
<path d="M1174.500 50 V65 M1174.500 91 V244 M1174.500 278 V692"/>
<path d="M1174.500 134.500 H1219"/>
<path d="M1149.500 65.500 H1219 M1149.500 91.500 H1219 M1149.500 65.500 V91.500 M1198.500 65.500 V91.500"/>
<!-- connectors -->
<path d="M343 479.500 H348.500 V462"/>
<path d="M343 608.500 H348.500 V626"/>
<path d="M1168.500 611 V594.500 H1179.500 V611"/>
</g>
<rect x="342" y="455.500" width="3" height="19" fill="#000"/>
<rect x="342" y="613" width="3" height="20" fill="#000"/>
<rect x="1173" y="599" width="3" height="19.500" fill="#000"/>
<circle cx="1174" cy="134" r="2.800" fill="url(#dth)" stroke="#000" stroke-width="1"/>
<!-- red highlight -->
<rect x="714" y="177.500" width="195.500" height="109.300" fill="none" stroke="#cf0a0a" stroke-width="2"/>
<!-- dashed box -->
<path d="M719.500 200.500 H831.500 V263.500 H719.500 Z" stroke="#10109c" stroke-width="1" fill="none" stroke-dasharray="17.700 6.300"/>
<!-- purple switch parts -->
<g stroke="#6e2676" stroke-width="1.100" fill="none">
<path d="M734.500 200 V219 L740.600 248.700"/>
<path d="M734.500 250 V263"/>
<path d="M783.500 200 V214 L777.400 248.700"/>
<path d="M774.200 246.500 H783.500 V263"/>
<path d="M737.500 232.500 H814.700 L819.900 238" stroke-dasharray="17.500 6.300"/>
<path d="M538.500 418 L544.500 452.500"/>
<path d="M542 436.500 H546.700 M553 436.500 H570.300"/>
<circle cx="575.700" cy="436.500" r="5.200"/>
<path d="M1174.500 243.700 L1179.700 277.300"/>
<path d="M1177.200 260.500 H1217.500" stroke-dasharray="16 7.600"/>
<path d="M1217.500 254.500 V265.500"/>
</g>
<!-- labels -->
<g font-size="16" style="white-space:pre">
<text x="742.300" y="190.700">3</text>
<text x="791.500" y="190.700">1</text>
<text x="741.800" y="283.800">4</text>
<text x="791" y="283.800">2</text>
<text x="546.700" y="410">2</text>
<text x="547.500" y="472.800">1</text>
<text x="357" y="492.800">27</text>
<text x="357" y="646">7</text>
<text x="1182" y="235">3</text>
<text x="1182" y="298">4</text>
<text x="1188" y="630.800">3</text>
<text x="1170" y="84">D</text>
<text x="1207" y="84">C</text>
<text transform="translate(725.200,170.700) rotate(-90)" textLength="31.600" lengthAdjust="spacingAndGlyphs">BK 1</text>
<text transform="translate(774.200,170.700) rotate(-90)" textLength="31.600" lengthAdjust="spacingAndGlyphs">BK 1</text>
<text transform="translate(530,376.400) rotate(-90)" xml:space="preserve" textLength="76.400" lengthAdjust="spacing">BNRD  0.5</text>
<text transform="translate(530,565.400) rotate(-90)" textLength="56.700" lengthAdjust="spacing" xml:space="preserve">BN   0,5</text>
<text transform="translate(725.200,449.900) rotate(-90)" textLength="53.800" lengthAdjust="spacingAndGlyphs">BKYE 1</text>
<text transform="translate(969.400,449.900) rotate(-90)" textLength="53.800" lengthAdjust="spacingAndGlyphs">BKYE 1</text>
<text transform="translate(1165.300,214.500) rotate(-90)">BK 0.75</text>
<text transform="translate(1165.300,372.800) rotate(-90)">GY 0.75</text>
<text transform="translate(1165.300,723) rotate(-90)">GY 0.75</text>
</g>
<g font-size="26" fill="#0000ff">
<text x="839.500" y="263" letter-spacing="1.500">S216</text>
<text x="589.800" y="452.800" letter-spacing="1.200">S32</text>
<text x="356.600" y="446.800">X1</text>
<text x="356.600" y="599.800">X21</text>
<text x="1188" y="584.800">X1</text>
</g>
<!-- inner vertical scrollbar -->
<rect x="1219" y="50" width="17" height="642" fill="url(#chk)"/>
<rect x="1219" y="114" width="17" height="301" fill="#f0f0f0"/>
<path d="M1219.500 415 V114.500 H1236" stroke="#fff" fill="none"/>
<path d="M1235.500 114 V414.500 H1219" stroke="#696969" fill="none"/>
<path d="M1234.500 115 V413.500 H1220" stroke="#a0a0a0" fill="none"/>
<rect x="1219" y="675" width="17" height="17" fill="#f0f0f0"/>
<path d="M1219.500 692 V675.500 H1236" stroke="#fff" fill="none"/>
<path d="M1235.500 675 V691.500 H1219" stroke="#696969" fill="none"/>
<path d="M1234.500 676 V690.500 H1220" stroke="#a0a0a0" fill="none"/>
<path d="M1224 682 H1231 L1227.500 685.500 Z" fill="#000"/>
<!-- inner horizontal scrollbar -->
<rect x="342" y="692" width="877" height="17" fill="url(#chk)"/>
<rect x="1219" y="692" width="17" height="17" fill="#f0f0f0"/>
<rect x="342" y="692" width="17" height="17" fill="#f0f0f0"/>
<path d="M342.500 709 V692.500 H359" stroke="#fff" fill="none"/>
<path d="M358.500 692 V708.500 H342" stroke="#696969" fill="none"/>
<path d="M357.500 693 V707.500 H343" stroke="#a0a0a0" fill="none"/>
<path d="M351 697 V704 L347.500 700.500 Z" fill="#000"/>
<rect x="1202" y="692" width="17" height="17" fill="#f0f0f0"/>
<path d="M1202.500 709 V692.500 H1219" stroke="#fff" fill="none"/>
<path d="M1218.500 692 V708.500 H1202" stroke="#696969" fill="none"/>
<path d="M1217.500 693 V707.500 H1203" stroke="#a0a0a0" fill="none"/>
<path d="M1209 697 V704 L1212.500 700.500 Z" fill="#000"/>
<rect x="845" y="692" width="290" height="17" fill="#f0f0f0"/>
<path d="M845.500 709 V692.500 H1135" stroke="#fff" fill="none"/>
<path d="M1134.500 692 V708.500 H845" stroke="#696969" fill="none"/>
<path d="M1133.500 693 V707.500 H846" stroke="#a0a0a0" fill="none"/>
</svg>
<!-- tooltip -->
<div class="abs" style="left:465px;top:235px;width:244px;height:19px;background:#ffffe1;border:1px solid #767676;font:12px 'Liberation Sans',sans-serif;line-height:19px;padding-left:2.400px;white-space:nowrap;letter-spacing:-0.020px">S216 Выключатель - стоп-сигнал, двойной</div>


<div class="abs" style="left:600px;top:664px;width:305px;text-align:right;font-weight:bold;font-size:16px;line-height:20px;white-space:nowrap;letter-spacing:0.050px">Meriva, год выпуска 2008</div>
<div id="tbl" class="abs">
<div class="h" style="letter-spacing:0.052px;top:0">Системы</div>
<div class="c k" style="letter-spacing:-0.52px;left:0;top:31px">BRAKE</div><div class="c d" style="left:92px;top:31px">Выключатель стоп-сигнала</div><div class="c k" style="letter-spacing:-0.38px;left:444px;top:31px">LIG-R</div><div class="c d" style="letter-spacing:0.06px;left:536px;top:31px">Заднее световое оборудование</div>
<div class="c k" style="letter-spacing:-0.41px;left:0;top:62px">CLUTCH</div><div class="c d" style="left:92px;top:62px">Переключатель сцепления</div>
<div class="c d" style="left:444px;top:62px;width:442px;background:#fff"></div>
<div class="h" style="letter-spacing:0.198px;top:95px">Компоненты</div>
<div class="c k" style="letter-spacing:-0.42px;left:0;top:126px">E79</div><div class="c d" style="letter-spacing:0.129px;left:92px;top:126px">Стоп-сигнал - центральное положение</div><div class="c k" style="letter-spacing:-0.2px;left:444px;top:126px">E106R.2</div><div class="c d" style="letter-spacing:0.19px;left:536px;top:126px">Стоп-сигнал - правый</div>
<div class="c k" style="letter-spacing:-0.2px;left:0;top:157px">E106L.2</div><div class="c d" style="letter-spacing:0.15px;left:92px;top:157px">Стоп-сигнал - левый</div><div class="c k" style="left:444px;top:157px">S32</div><div class="c d" style="left:536px;top:157px">Выключатель - стоп-сигнал</div>
</div>

</div>

<!-- right pane scrollbar -->
<div class="abs sbv" style="left:1249px;top:50px;width:16px;height:871px"></div>
<svg class="abs" style="left:1253px;top:57px" width="9" height="6" viewBox="0 0 9 6"><path d="M0.5 5.2 L4.5 0.8 L8.5 5.2 Z" fill="#4d4d4d"/></svg>
<div class="abs thv" style="left:1249px;top:136px;width:15px;height:305px"></div>
<div class="abs" style="left:1253px;top:284px;width:7px;height:9px;background:repeating-linear-gradient(180deg,#4a4a4a 0,#4a4a4a 1.2px,#f4f4f4 1.2px,#f4f4f4 2.2px,rgba(0,0,0,0) 2.2px,rgba(0,0,0,0) 3px)"></div>
<svg class="abs" style="left:1253px;top:910px" width="9" height="6" viewBox="0 0 9 6"><path d="M0.5 0.8 L4.5 5.2 L8.5 0.8 Z" fill="#4d4d4d"/></svg>


<!-- STATUS BAR -->
<div id="st" class="abs">

<div class="abs" style="left:0;top:0;width:1265px;height:2px;background:#f8f8f8"></div>
<div class="abs" style="left:-5.500px;top:8px;line-height:16px;white-space:nowrap;letter-spacing:0.150px">Готово</div>
<div class="pn" style="left:944px;width:32px;letter-spacing:-0.500px;padding-left:2px">TIS</div>
<div class="pn" style="left:978px;width:46px;letter-spacing:-1.200px;padding-left:1.500px">OPEL</div>
<div class="pn" style="left:1025px;width:200px;letter-spacing:-0.390px">Opel, MERIVA, 2008, Z 16 XEP, 5-MT</div>
<div class="abs" style="left:1232px;top:8px;width:14px;height:14px;background:#c8c8c8"></div>
<div class="abs" style="left:1232px;top:8px;width:13px;height:13px;border-radius:50%;background:radial-gradient(circle at 35% 30%,#b0ffb0 0,#22e022 30%,#0ac00a 70%,#089008 100%)"></div>
<svg class="abs" style="left:1252px;top:11px" width="13" height="13" viewBox="0 0 13 13"><path d="M1 13 L13 1 M5 13 L13 5 M9 13 L13 9" stroke="#a8a8a8" stroke-width="1.200"/><path d="M2 13 L13 2 M6 13 L13 6 M10 13 L13 10" stroke="#fff" stroke-width="1"/></svg>

</div>
<div class="abs" style="left:0;top:944px;width:1265px;height:1px;background:#a9b4c6"></div><div class="abs" style="left:0;top:945px;width:1265px;height:1px;background:#262c3a"></div><div class="abs" style="left:0;top:946px;width:238px;height:1px;background:#3d5f94"></div><div class="abs" style="left:238px;top:946px;width:1027px;height:1px;background:repeating-linear-gradient(90deg,#3d5f94 0,#3d5f94 3px,#eef1f6 3px,#eef1f6 61px)"></div>
</body>
</html>
